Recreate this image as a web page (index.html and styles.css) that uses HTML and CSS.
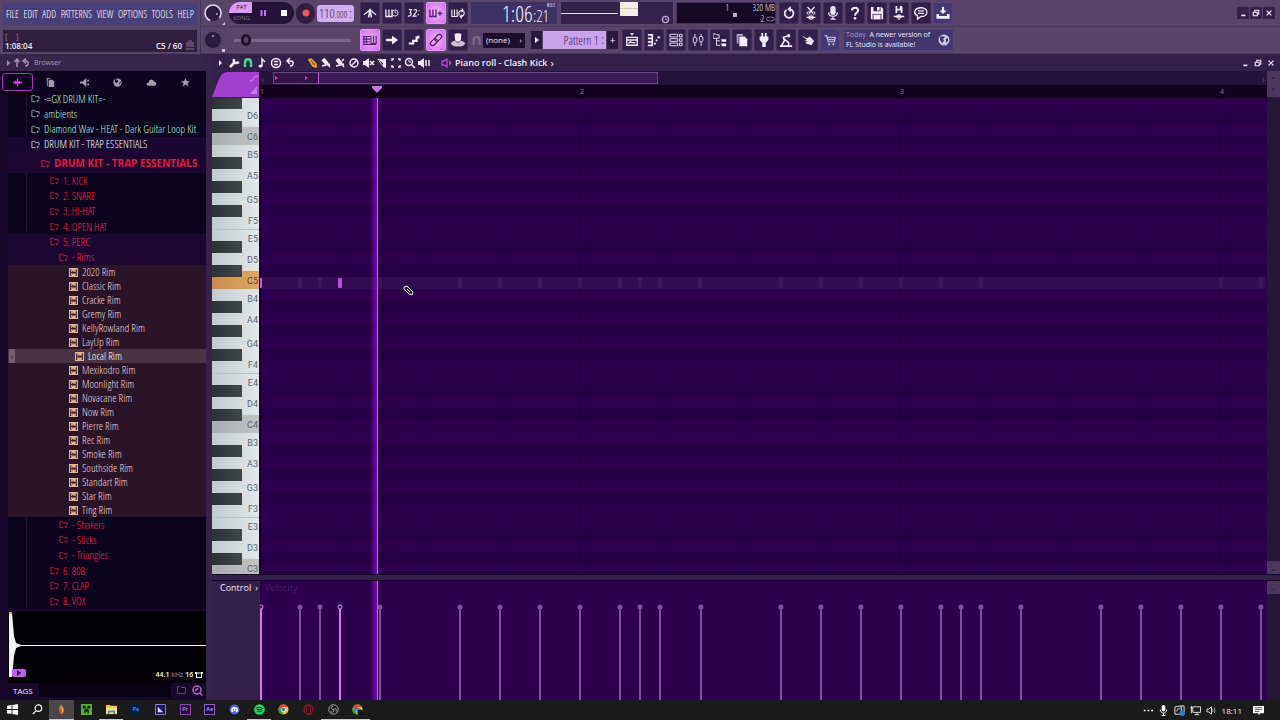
FILE: index.html
```
<!DOCTYPE html>
<html lang="en">
<head>
  <meta charset="utf-8">
  <title>FL Studio</title>
  <link rel="stylesheet" href="styles.css">
</head>
<body>
  <!-- shared icons -->
  <svg class="defs" aria-hidden="true">
    <symbol id="folder" viewBox="0 0 10 10"><path d="M9 6V3H5L4 1.500H1V8.500H5" fill="none" stroke="currentColor"/><path d="M6 7H9L7.500 9.500Z" fill="currentColor"/></symbol>
    <symbol id="sample" viewBox="0 0 8 8"><path d="M0 0H8V8H0Z" fill="#e3b593"/><path d="M1.500 1V7M6.500 1V7M2 4H6M3.500 2.500V5.500M5 3V5" stroke="#40202a" fill="none"/></symbol>
    <symbol id="stem" viewBox="0 0 8 120" overflow="visible"><path d="M4 28V120" stroke="currentColor" stroke-width="2"/><circle cx="4" cy="26" r="2.500" fill="currentColor"/></symbol>
    <symbol id="stem-on" viewBox="0 0 8 120" overflow="visible"><path d="M4 28V120" stroke="#d678f2" stroke-width="2"/><circle cx="4" cy="26" r="2" fill="#4a1070" stroke="#e08af5"/></symbol>
    <symbol id="min" viewBox="0 0 10 10"><path d="M3 8H8" stroke="currentColor" stroke-width="2"/></symbol>
    <symbol id="restore" viewBox="0 0 10 10"><path d="M3.500 3.500V1.500H8.500V6.500H6.500M1.500 4H6.500V8.500H1.500Z" fill="none" stroke="currentColor" stroke-width="1.300"/></symbol>
    <symbol id="close" viewBox="0 0 10 10"><path d="M2 2L8 8M8 2L2 8" stroke="currentColor" stroke-width="1.500"/></symbol>
    <symbol id="globe" viewBox="0 0 14 14"><circle cx="7" cy="7" r="5.500" fill="#cfc4de"/><path d="M5 3L8 4L6 6L7 8L5 10L3 7L3 4ZM9 6L11 5L11 8L9 10Z" fill="#43366b"/></symbol>
  </svg>

  <header class="toolbar">
    <div class="toolbar-left">
      <nav class="menu">
        <a href="#">FILE</a><a href="#">EDIT</a><a href="#">ADD</a><a href="#">PATTERNS</a><a href="#">VIEW</a><a href="#">OPTIONS</a><a href="#">TOOLS</a><a href="#">HELP</a>
      </nav>
      <div class="hint">
        <div><small>[ &nbsp; &nbsp;]</small><b>1:08:04</b></div>
        <b>C5 / 60</b>
        <svg width="8" height="12" viewBox="0 0 8 12"><path d="M1 8V3M3 8V1M5 8V1M7 8V3M0 10H8" stroke="#6a5874" fill="none" stroke-width="1.500"/></svg>
      </div>
    </div>
    <div class="toolbar-rows">
      <div class="row">
        <button class="knob" aria-label="Main volume"><svg width="24" height="24" viewBox="0 0 24 24"><circle cx="12" cy="12" r="8" fill="#2d1c3f" stroke="#e9dcf3" stroke-width="1.500" stroke-dasharray="40 12" transform="rotate(110 12 12)"/><circle cx="16" cy="13" r="1" fill="#b89fcc"/><path d="M21 24H24V21Z" fill="#cfc0da"/></svg></button>
        <div class="transport">
          <div class="mode"><button class="on">PAT</button><button>SONG</button></div>
          <button aria-label="Pause"><svg width="8" height="8" viewBox="0 0 8 8"><path d="M2.500 1V7M6 1V7" stroke="#c76cf0" stroke-width="2"/></svg></button>
          <button aria-label="Stop"><svg width="8" height="8" viewBox="0 0 8 8"><path d="M1 1H7V7H1Z" fill="#fff"/></svg></button>
        </div>
        <button class="record" aria-label="Record"><svg width="8" height="8" viewBox="0 0 8 8"><circle cx="4" cy="4" r="3.500" fill="#f0565a"/></svg></button>
        <div class="tempo"><span>110<small>.000</small></span><i>:</i></div>
        <div class="buttons">
          <button class="tool" aria-label="Metronome"><svg viewBox="0 0 16 16"><path d="M1 10L6 6M15 10L10 6M8 3V13M6 13L8 4L10 13" fill="none" stroke="currentColor" stroke-width="1.200"/><path d="M5 6L8 3L11 6L8 8Z" fill="currentColor"/></svg></button>
          <button class="tool" aria-label="Wait for input"><svg viewBox="0 0 16 16"><path d="M1 4V12H8V4M4.500 4V11" fill="none" stroke="currentColor" stroke-width="1.500"/><circle cx="11.500" cy="8" r="3.500" fill="none" stroke="currentColor"/><path d="M11.500 6V8H13" fill="none" stroke="currentColor"/></svg></button>
          <button class="tool" aria-label="Countdown"><svg viewBox="0 0 16 16"><path d="M2 4H5L3.500 7.500C6 7.500 5 12 1 11.500M8 5C9 3 12 4 10.500 7L7 11.500H11M14 5V6M13 9V10.500" fill="none" stroke="currentColor" stroke-width="1.300"/></svg></button>
          <button class="tool on" aria-label="Blend recording"><svg viewBox="0 0 16 16"><path d="M1 4V12H8V4M4.500 4V11M10 8.500H15M12.500 6V11" fill="none" stroke="currentColor" stroke-width="1.500"/></svg></button>
          <button class="tool" aria-label="Loop recording"><svg viewBox="0 0 16 16"><path d="M1 4V12H7V4M4 4V11M9.500 11C8 7 10 5 13 5M14.500 6C16 9 14 12 11 12M12 3L14 5L12 7M12.500 10L10.500 12L12.500 14" fill="none" stroke="currentColor" stroke-width="1.300"/></svg></button>
        </div>
        <div class="clock"><span>1:06<small>:21</small></span><sup>B:S:T</sup></div>
        <div class="scope"><span></span><i></i><svg width="9" height="9" viewBox="0 0 10 10"><circle cx="5" cy="5" r="3.500" fill="none" stroke="#b9a7c8" stroke-width="1.500"/><path d="M5 3V5H7" stroke="#b9a7c8" fill="none"/></svg></div>
        <div class="cpu"><span>1</span><i></i><div><span>320 MB</span><span>2 <svg width="9" height="6" viewBox="0 0 9 6"><ellipse cx="4.500" cy="3" rx="4" ry="2" fill="none" stroke="#8c7b98"/></svg></span></div></div>
        <div class="buttons">
          <button class="tool" aria-label="Undo"><svg viewBox="0 0 16 16"><path d="M5 4.500A5 5 0 1 0 9 3.500" fill="none" stroke="currentColor" stroke-width="2"/><path d="M10 0V7L6 3.500Z" fill="currentColor"/></svg></button>
          <button class="tool" aria-label="Cut"><svg viewBox="0 0 16 16"><path d="M4 1L10 8M12 1L6 8M3 13H13M6 11V15M10 11V15M8 10V16" stroke="currentColor" stroke-width="1.500" fill="none"/><circle cx="5" cy="8" r="1.500" fill="none" stroke="currentColor"/><circle cx="11" cy="8" r="1.500" fill="none" stroke="currentColor"/></svg></button>
          <button class="tool" aria-label="Microphone"><svg viewBox="0 0 16 16"><rect x="5" y="0" width="6" height="10" rx="3" fill="currentColor"/><path d="M3 7C3 13 13 13 13 7M8 12V15M5 15H11" fill="none" stroke="currentColor" stroke-width="1.300"/></svg></button>
          <button class="tool" aria-label="Help"><svg viewBox="0 0 16 16"><path d="M4.500 5C4.500 1 11.500 1 11.500 5C11.500 7.500 8 7.500 8 11" fill="none" stroke="currentColor" stroke-width="2.200"/><circle cx="8" cy="14" r="1.500" fill="currentColor"/></svg></button>
          <button class="tool" aria-label="Save"><svg viewBox="0 0 16 16"><path d="M1 1H13L15 3V15H1Z" fill="currentColor"/><path d="M4 1H12V6H4ZM3 9H13V15H3Z" fill="#33204a"/><path d="M8 1H11V5H8ZM4 10H12V15H4Z" fill="currentColor"/></svg></button>
          <button class="tool" aria-label="Save as"><svg viewBox="0 0 16 16"><path d="M4 0H11L12 1V8H4Z" fill="currentColor"/><path d="M6 0H9V3H6ZM6 5H10V8H6Z" fill="#33204a"/><path d="M2 12H14M6 10V14M8 9V16M10 10V14" stroke="currentColor" stroke-width="1.500"/></svg></button>
          <button class="tool" aria-label="Messages"><svg viewBox="0 0 16 16"><path d="M8 2C17 2 17 12 8 12L4 15V11C-1 9 0 2 8 2ZM4.500 5.500H11.500M4.500 8.500H11.500" fill="none" stroke="currentColor" stroke-width="1.500"/></svg></button>
          <button class="tool blue" aria-label="Download"><svg viewBox="0 0 16 16"><path d="M8 1V6" fill="none" stroke="currentColor" stroke-width="2.500"/><path d="M4 5H12L8 9Z" fill="currentColor"/><path d="M2 9V13H14V9" fill="none" stroke="currentColor" stroke-width="3"/></svg></button>
        </div>
        <div class="window-buttons">
          <button aria-label="Minimize"><svg><use href="#min"/></svg></button>
          <button aria-label="Restore"><svg><use href="#restore"/></svg></button>
          <button aria-label="Close"><svg><use href="#close"/></svg></button>
        </div>
      </div>
      <div class="row">
        <button class="knob" aria-label="Main pitch"><svg width="24" height="24" viewBox="0 0 24 24"><circle cx="12" cy="12" r="9.500" fill="none" stroke="#3d2a50" stroke-dasharray="1 2"/><circle cx="12" cy="12" r="8" fill="#2d1c3f"/><circle cx="12" cy="8" r="1" fill="#b89fcc"/><path d="M21 21H24V24H21Z" fill="#cfc0da"/></svg></button>
        <input class="position" type="range" min="0" max="100" value="7" aria-label="Song position">
        <div class="buttons">
          <button class="tool on" aria-label="Typing keyboard"><svg viewBox="0 0 16 16"><path d="M0 4H8M0 7H8M0 10H8M0 13H15M1 4V12M4 4V12M9 3V12H15V3M12 3V12" fill="none" stroke="currentColor" stroke-width="1.300"/></svg></button>
          <button class="tool" aria-label="Scroll"><svg viewBox="0 0 16 16"><path d="M1 6.500H8V3L15 8L8 13V9.500H1Z" fill="currentColor"/></svg></button>
          <button class="tool" aria-label="Step"><svg viewBox="0 0 16 16"><path d="M2 12H7V9H11V5H13V3" fill="none" stroke="currentColor" stroke-width="2.500"/></svg></button>
          <button class="tool on" aria-label="Link"><svg viewBox="0 0 16 16"><g transform="rotate(-45 8 8)" fill="none" stroke="currentColor" stroke-width="1.400"><rect x="0" y="5.500" width="9" height="5" rx="2.500"/><rect x="7" y="5.500" width="9" height="5" rx="2.500"/></g></svg></button>
          <button class="tool" aria-label="Hat"><svg viewBox="0 0 16 16"><ellipse cx="8" cy="12" rx="8" ry="3.500" fill="#cdbfd8"/><path d="M4 1C6 0 10 0 12 1L11 10C10 11 6 11 5 10Z" fill="currentColor"/><path d="M5 9C6 11 10 11 11 9" stroke="#33204a" fill="none"/></svg></button>
        </div>
        <svg class="magnet" width="9" height="9" viewBox="0 0 9 9"><path d="M1.500 9V4C1.500 0 7.500 0 7.500 4V9" fill="none" stroke="#7c698a" stroke-width="2"/></svg>
        <button class="snap"><span>(none)</span><i>›</i></button>
        <div class="pattern">
          <button aria-label="Pattern menu"><svg width="4" height="6" viewBox="0 0 4 6"><path d="M0 0V6L4 3Z" fill="#fff"/></svg></button>
          <label><input type="text" value="Pattern 1" aria-label="Pattern"><i>:</i></label>
          <button aria-label="Add pattern">+</button>
        </div>
        <div class="buttons">
          <button class="tool" aria-label="Playlist"><svg viewBox="0 0 16 16"><path d="M2 5H14V14H2ZM2 8H14M4 12L6 10L8 11H12" fill="none" stroke="currentColor" stroke-width="1.500"/><path d="M6 0H10L8 3Z" fill="currentColor"/></svg></button>
          <button class="tool" aria-label="Piano roll"><svg viewBox="0 0 16 16"><path d="M1 2H6V14H1M1 6H5M1 10H5M8 12H10M10 8.500H12M12 5H15" fill="none" stroke="currentColor" stroke-width="2"/></svg></button>
          <button class="tool" aria-label="Channel rack"><svg viewBox="0 0 16 16"><path d="M1 1.500H10V4.500H1ZM1 6.500H10V9.500H1ZM1 11.500H10V14.500H1ZM12 1.500H15V4.500H12ZM12 6.500H15V9.500H12ZM12 11.500H15V14.500H12Z" fill="none" stroke="currentColor"/></svg></button>
          <button class="tool" aria-label="Mixer"><svg viewBox="0 0 16 16"><path d="M4.500 1V5M4.500 11V15M11.500 1V4M11.500 10V15" stroke="currentColor"/><rect x="2.500" y="5" width="4" height="6" rx="1.500" fill="none" stroke="currentColor"/><rect x="9.500" y="4" width="4" height="6" rx="1.500" fill="none" stroke="currentColor"/></svg></button>
          <button class="tool" aria-label="Browser"><svg viewBox="0 0 16 16"><path d="M0 1H3L4 2H7V6H0ZM4 6V14H8M4 9H8M9 8H11M9 13H11" fill="none" stroke="currentColor"/><path d="M10 7H15V10H10ZM10 12H15V15H10Z" fill="currentColor"/></svg></button>
          <button class="tool" aria-label="Projects"><svg viewBox="0 0 16 16"><path d="M2 1H9V3H4V12H2Z" fill="#b9a7c8"/><path d="M5 4H11L14 7V15H5Z" fill="currentColor"/></svg></button>
          <button class="tool" aria-label="Plugins"><svg viewBox="0 0 16 16"><path d="M5 0H7V4H9V0H11V4H13V8L10 11V16H6V11L3 8V4H5Z" fill="currentColor"/></svg></button>
          <button class="tool" aria-label="Tempo tapper"><svg viewBox="0 0 16 16"><path d="M11 3L5 5L6 9L3 14M5 6L11 11V14M1 15H15" fill="none" stroke="currentColor" stroke-width="1.800"/><circle cx="11" cy="3" r="2" fill="currentColor"/></svg></button>
          <button class="tool" aria-label="Touch"><svg viewBox="0 0 16 16"><path d="M1 3L7 6L10 4L15 9L12 14L6 12L5 10L8 10L4 8L7 8Z" fill="currentColor"/></svg></button>
          <button class="tool blue" aria-label="Shop"><svg viewBox="0 0 16 16"><path d="M2 3H4L6 10H13L14 5H5M5 7.500H13" fill="none" stroke="#c4b6e6" stroke-width="1.400"/><circle cx="7" cy="13" r="1.200" fill="#c4b6e6"/><circle cx="12" cy="13" r="1.200" fill="#c4b6e6"/></svg></button>
        </div>
        <a class="news" href="#"><span><em>Today</em> &nbsp;A newer version of<br>FL Studio is available!</span><svg width="14" height="14"><use href="#globe"/></svg></a>
      </div>
    </div>
  </header>

  <main class="workspace">
    <aside class="browser">
      <div class="browser-title"><svg width="24" height="10" viewBox="0 0 24 10"><path d="M1 2V8L4 5Z" fill="#a18fae"/><path d="M11 9V2M8.500 4L11 1L13.500 4M18 3H20C23 3 23 8 19 8M20 0.500L17 3L20 5.500" fill="none" stroke="#a18fae" stroke-width="1.500"/></svg><span>Browser</span></div>
      <div class="tabs">
        <button class="on" aria-label="All"><svg viewBox="0 0 12 12"><path d="M1 6H11M4 4V8M6 2V10M8 4V8" stroke="#e23bf0" stroke-width="1.400"/></svg></button>
        <button aria-label="Files"><svg viewBox="0 0 12 12"><path d="M2 1H6V2H3V10H2ZM4 3H8L10 5V11H4Z" fill="currentColor"/></svg></button>
        <button aria-label="Plugins"><svg viewBox="0 0 12 12"><path d="M1 5H4L8 1V11L4 7H1ZM9 3H11V5H9ZM9 7H11V9H9Z" fill="currentColor"/></svg></button>
        <button aria-label="Online"><svg viewBox="0 0 12 12"><circle cx="6" cy="6" r="4.500" fill="currentColor"/><path d="M4 2L7 4L5 7L3 5ZM8 6L10 5L8 9Z" fill="#0d0420"/></svg></button>
        <button aria-label="Cloud"><svg viewBox="0 0 12 12"><path d="M3 9.500C0 9.500 0 6 3 6C3 2 8 2 8.500 5C12 5 12 9.500 9.500 9.500Z" fill="currentColor"/></svg></button>
        <button aria-label="Favourites"><svg viewBox="0 0 12 12"><path d="M6 1L7.500 4.500H11L8.200 6.800L9.200 10.500L6 8.200L2.800 10.500L3.800 6.800L1 4.500H4.500Z" fill="currentColor"/></svg></button>
      </div>
      <div class="tree">
        <ul class="folders top">
          <li class="green"><svg><use href="#folder"/></svg>-=GX DRUM KIT=-</li>
          <li class="green"><svg><use href="#folder"/></svg>ambients</li>
          <li class="green"><svg><use href="#folder"/></svg>Diamond Wav - HEAT - Dark Guitar Loop Kit</li>
          <li class="open"><svg><use href="#folder"/></svg>DRUM KIT - TRAP ESSENTIALS</li>
        </ul>
        <div class="kit"><svg><use href="#folder"/></svg>DRUM KIT - TRAP ESSENTIALS</div>
        <ul class="folders">
          <li><svg><use href="#folder"/></svg>1. KICK</li>
          <li><svg><use href="#folder"/></svg>2. SNARE</li>
          <li><svg><use href="#folder"/></svg>3. HI-HAT</li>
          <li><svg><use href="#folder"/></svg>4. OPEN HAT</li>
          <li class="lit"><svg><use href="#folder"/></svg>5. PERC</li>
          <li class="lit sub"><svg><use href="#folder"/></svg>- Rims</li>
        </ul>
        <ul class="samples">
          <li><svg><use href="#sample"/></svg>2020 Rim</li>
          <li><svg><use href="#sample"/></svg>Classic Rim</li>
          <li><svg><use href="#sample"/></svg>Cracke Rim</li>
          <li><svg><use href="#sample"/></svg>Gremy Rim</li>
          <li><svg><use href="#sample"/></svg>KellyRowland Rim</li>
          <li><svg><use href="#sample"/></svg>LayUp Rim</li>
          <li class="selected"><svg><use href="#sample"/></svg>Local Rim</li>
          <li><svg><use href="#sample"/></svg>Mexikodro Rim</li>
          <li><svg><use href="#sample"/></svg>Moonlight Rim</li>
          <li><svg><use href="#sample"/></svg>Novacane Rim</li>
          <li><svg><use href="#sample"/></svg>Now Rim</li>
          <li><svg><use href="#sample"/></svg>Pierre Rim</li>
          <li><svg><use href="#sample"/></svg>Rec Rim</li>
          <li><svg><use href="#sample"/></svg>Smoke Rim</li>
          <li><svg><use href="#sample"/></svg>Southside Rim</li>
          <li><svg><use href="#sample"/></svg>Standart Rim</li>
          <li><svg><use href="#sample"/></svg>Star Rim</li>
          <li><svg><use href="#sample"/></svg>Ting Rim</li>
        </ul>
        <ul class="folders">
          <li class="sub"><svg><use href="#folder"/></svg>- Shakers</li>
          <li class="sub"><svg><use href="#folder"/></svg>- Sticks</li>
          <li class="sub"><svg><use href="#folder"/></svg>- Triangles</li>
          <li><svg><use href="#folder"/></svg>6. 808</li>
          <li><svg><use href="#folder"/></svg>7. CLAP</li>
          <li><svg><use href="#folder"/></svg>8. VOX</li>
        </ul>
      </div>
      <div class="preview">
        <svg class="wave" viewBox="0 0 197 70" preserveAspectRatio="none"><path d="M1 2H4L6 25L8 32L13 34H197V35H13L8 37L6 45L4 66H1Z" fill="#f4f0f6"/><path d="M1 1H4V3H1Z" fill="#e79a4e"/></svg>
        <button class="play" aria-label="Play sample"><svg width="4" height="6" viewBox="0 0 4 6"><path d="M0 0V6L4 3Z" fill="#2a0a40"/></svg></button>
        <span class="rate"><b>44.1</b> kHz <b>16</b> <svg width="8" height="8" viewBox="0 0 8 8"><path d="M0 1H2V3H0ZM6 1H8V3H6Z" fill="#fff"/><path d="M1 2H7M1.500 2V7M6.500 2V7M1 6.500H7" fill="none" stroke="#fff"/></svg></span>
      </div>
      <div class="tags">
        <label for="tags">TAGS</label>
        <input type="text" id="tags">
        <svg width="9" height="8" viewBox="0 0 9 8"><path d="M0.500 7.500V0.500H3L4 1.500H8.500V7.500Z" fill="none" stroke="#57475f"/></svg>
        <svg width="11" height="11" viewBox="0 0 11 11"><circle cx="5" cy="5" r="4" fill="none" stroke="#b565d8" stroke-width="1.500"/><path d="M8 8L10.500 10.500M3 6L6 3" stroke="#b565d8" stroke-width="1.500"/></svg>
      </div>
    </aside>

    <section class="piano-roll">
      <div class="roll-title">
        <svg width="222" height="14" viewBox="0 0 222 14" fill="none" stroke="#f3ebf8" stroke-width="1.500">
          <path d="M7 4V10L10 7Z" fill="#f3ebf8" stroke="none"/>
          <path d="M18 11L23 6M22 3C21 7 24 8 27 6" stroke-width="2.500"/>
          <path d="M33 11V7C33 2 39 2 39 7V11" stroke="#46d98b" stroke-width="2.500"/>
          <path d="M50 10V3L53 6"/><ellipse cx="48.500" cy="10" rx="2" ry="1.500" fill="#f3ebf8" stroke="none"/>
          <circle cx="64" cy="7" r="4.500"/><path d="M62 5.500H66M62 8.500H66"/>
          <path d="M75 5H79C82 5 82 10 78 10M78 2L75 5L78 8"/>
          <path d="M97 4L99 3L104 8L104 11L101 10Z" fill="#8c5f28" stroke="#f0a93c"/>
          <path d="M111 3L115 8" stroke-width="4"/><path d="M110 10L118 8M115 7L118 11"/>
          <path d="M125 3L129 8" stroke-width="4"/><path d="M124 10L132 8M129 7L132 11M130 5L132 3"/>
          <circle cx="142" cy="7" r="4"/><path d="M139 10L145 4"/>
          <path d="M151 5H153L157 2V12L153 9H151Z" fill="#f3ebf8" stroke="none"/><path d="M158 5L162 9M162 5L158 9"/>
          <path d="M165 3H174V12L171 11V7Z" fill="#f3ebf8" stroke="none"/><path d="M167 5L172 11" stroke-width="1"/>
          <path d="M180 5V3H182M186 3H188V5M188 9V11H186M182 11H180V9"/>
          <circle cx="197" cy="6" r="3.500"/><path d="M200 9L203 12"/><path d="M197 4V6H199" stroke-width="1"/>
          <path d="M206 5H208L212 2V12L208 9H206Z" fill="#f3ebf8" stroke="none"/><path d="M214 4V10M217 4V10"/>
        </svg>
        <svg class="speaker" width="11" height="10" viewBox="0 0 11 10"><path d="M1 3H3L6 1V9L3 7H1Z" fill="none" stroke="#b04fd8" stroke-width="1.300"/><path d="M8 2V8L10.500 5Z" fill="#b04fd8"/></svg>
        <h1>Piano roll - Clash Kick</h1><i>›</i>
        <div class="window-buttons plain">
          <button aria-label="Minimize"><svg><use href="#min"/></svg></button>
          <button aria-label="Restore"><svg><use href="#restore"/></svg></button>
          <button aria-label="Close"><svg><use href="#close"/></svg></button>
        </div>
      </div>
      <div class="roll-head">
        <svg class="corner" viewBox="0 0 47 27" preserveAspectRatio="none"><path d="M0 26L7 8Q10 1 16 1H47V26Z" fill="#a33fd0"/><path d="M38 10C43 10 40 5 46 5" fill="none" stroke="#d79bf0"/><path d="M38 23H45V15Z" fill="#c77be8"/></svg>
        <div class="head-bars">
          <div class="overview"><span>‹</span><div class="overview-range"><svg width="34" height="6" viewBox="0 0 34 6"><path d="M1 1V5L4 3ZM31 1V5L34 3Z" fill="#c94fb8"/></svg></div><span class="last">›</span></div>
          <div class="ruler"><span>1</span><span>2</span><span>3</span><span>4</span><svg class="marker" width="12" height="8" viewBox="0 0 12 8"><path d="M1 0H11V2L6 7L1 2Z" fill="#c473ee"/></svg></div>
        </div>
        <div class="head-scroll"><button>•</button><button>⌃</button></div>
      </div>
      <div class="roll-body">
        <div class="keys">
          <div class="key tall sharp">D6</div>
          <div class="key sharp root">C6</div>
          <div class="key">B5</div>
          <div class="key tall sharp">A5</div>
          <div class="key tall sharp">G5</div>
          <div class="key sharp">F5</div>
          <div class="key top">E5</div>
          <div class="key tall sharp">D5</div>
          <div class="key sharp pressed">C5</div>
          <div class="key">B4</div>
          <div class="key tall sharp">A4</div>
          <div class="key tall sharp">G4</div>
          <div class="key sharp">F4</div>
          <div class="key top">E4</div>
          <div class="key tall sharp">D4</div>
          <div class="key sharp root">C4</div>
          <div class="key">B3</div>
          <div class="key tall sharp">A3</div>
          <div class="key tall sharp">G3</div>
          <div class="key sharp">F3</div>
          <div class="key top">E3</div>
          <div class="key tall sharp">D3</div>
          <div class="key sharp root">C3</div>
        </div>
        <div class="grid">
          <svg class="canvas">
            <path d="M0 179H1006V191H0Z" fill="#3a1558" opacity=".5"/>
            <g fill="#4a246a" opacity=".45">
              <path d="M38 180H42V190H38ZM58 180H62V190H58ZM118 180H122V190H118ZM198 180H202V190H198ZM238 180H242V190H238ZM278 180H282V190H278ZM318 180H322V190H318ZM358 180H362V190H358ZM378 180H382V190H378ZM398 180H402V190H398ZM438 180H442V190H438Z"/>
              <path d="M519 180H523V190H519ZM559 180H563V190H559ZM599 180H603V190H599ZM639 180H643V190H639ZM679 180H683V190H679ZM719 180H723V190H719ZM959 180H963V190H959ZM999 180H1003V190H999Z"/>
            </g>
            <rect x="-2" y="180" width="4" height="10" rx="1" fill="#c562ea"/>
            <rect x="78" y="180" width="4" height="10" rx="1" fill="#b552dc"/>
            <path d="M144 189L147 188L153 194L152 197L149 196L144 191Z" fill="#2c2030" stroke="#efe6e8"/><path d="M147 191L150 194" stroke="#efe6e8"/>
          </svg>
          <div class="playhead"></div>
        </div>
        <div class="scroll"><span></span><button>⌄</button></div>
      </div>
      <div class="splitter"></div>
      <div class="control">
        <button class="control-name">Control <i>›</i></button>
        <div class="velocity">
          <span>Velocity</span>
          <svg class="canvas">
            <g color="#80509c">
              <use href="#stem" x="36" width="8" height="120"/><use href="#stem" x="56" width="8" height="120"/>
              <use href="#stem" x="116" width="8" height="120"/><use href="#stem" x="196" width="8" height="120"/>
              <use href="#stem" x="236" width="8" height="120"/><use href="#stem" x="276" width="8" height="120"/>
              <use href="#stem" x="316" width="8" height="120"/><use href="#stem" x="356" width="8" height="120"/>
              <use href="#stem" x="376" width="8" height="120"/><use href="#stem" x="396" width="8" height="120"/>
              <use href="#stem" x="437" width="8" height="120"/><use href="#stem" x="517" width="8" height="120"/>
              <use href="#stem" x="557" width="8" height="120"/><use href="#stem" x="597" width="8" height="120"/>
              <use href="#stem" x="637" width="8" height="120"/><use href="#stem" x="677" width="8" height="120"/>
              <use href="#stem" x="697" width="8" height="120"/><use href="#stem" x="717" width="8" height="120"/>
              <use href="#stem" x="757" width="8" height="120"/><use href="#stem" x="837" width="8" height="120"/>
              <use href="#stem" x="877" width="8" height="120"/><use href="#stem" x="917" width="8" height="120"/>
              <use href="#stem" x="957" width="8" height="120"/><use href="#stem" x="997" width="8" height="120"/>
            </g>
            <use href="#stem-on" x="-3" width="8" height="120"/><use href="#stem-on" x="76" width="8" height="120"/>
          </svg>
          <div class="playhead"></div>
        </div>
        <div class="scroll"><button>-</button></div>
      </div>
    </section>
  </main>

  <footer class="taskbar">
    <nav class="apps">
      <button aria-label="Start"><svg viewBox="0 0 12 12"><path d="M0 2L5 1V5.500H0ZM6 1L12 0V5.500H6ZM0 6.500H5V11L0 10ZM6 6.500H12V12L6 11Z" fill="#fff"/></svg></button>
      <button aria-label="Search"><svg viewBox="0 0 12 12"><circle cx="7" cy="4.500" r="3.500" fill="none" stroke="#fff" stroke-width="1.300"/><path d="M4.500 7L1 11" stroke="#fff" stroke-width="1.500"/></svg></button>
      <button class="active" aria-label="FL Studio"><svg viewBox="0 0 12 12"><path d="M5 2C10 4 10 9 6 11C2 9 3 5 5 2Z" fill="#ee7f2e"/><path d="M5 2C8 5 8 9 6 11C8 8 5 5 5 2Z" fill="#f6c04a"/><path d="M4 1L7 2L6 4Z" fill="#5cb34c"/><path d="M4 5C3 8 4 10 6 11V5Z" fill="#d8403a"/></svg></button>
      <button aria-label="Minecraft"><svg viewBox="0 0 12 12"><path d="M0 0H12V12H0Z" fill="#57ab38"/><path d="M2 2H5V5H2ZM7 2H10V5H7ZM5 5H7V6H8.500V10H7V8.500H5V10H3.500V6H5Z" fill="#10240c"/></svg></button>
      <button class="running" aria-label="Explorer"><svg viewBox="0 0 12 12"><path d="M0 1H4L5 2H12V11H0Z" fill="#f1c24c"/><path d="M0 4H12V11H0Z" fill="#fbe08a"/><path d="M2 7H10V11H8V9H4V11H2Z" fill="#3f8fd0"/></svg></button>
      <button class="app ps"><span>Ps</span></button>
      <button aria-label="Media Encoder"><svg viewBox="0 0 12 12"><path d="M.5.5H11.500V11.500H.5Z" fill="#1b1650" stroke="#8e8be8"/><path d="M3 3L9 9H3Z" fill="#d9d8ff"/></svg></button>
      <button class="app pr"><span>Pr</span></button>
      <button class="app ae"><span>Ae</span></button>
      <button aria-label="Discord"><svg viewBox="0 0 12 12"><circle cx="6" cy="6" r="5.500" fill="#5661e8"/><path d="M3 4C5 3 7 3 9 4L10 8L8 9L7.500 8H4.500L4 9L2 8Z" fill="#fff"/><circle cx="4.700" cy="6.300" r=".8" fill="#5661e8"/><circle cx="7.300" cy="6.300" r=".8" fill="#5661e8"/></svg></button>
      <button class="running" aria-label="Spotify"><svg viewBox="0 0 12 12"><circle cx="6" cy="6" r="5.800" fill="#1ed760"/><path d="M2.500 4.300C5 3.500 8 3.800 9.700 4.800M3 6.200C5 5.500 7.500 5.800 9 6.700M3.500 8C5 7.500 7 7.700 8.300 8.500" fill="none" stroke="#111"/></svg></button>
      <button aria-label="Chrome"><svg viewBox="0 0 12 12"><circle cx="6" cy="6" r="5.500" fill="#f2c230"/><path d="M1.200 3.300A5.500 5.500 0 0 1 10.800 3.300H6L4 7Z" fill="#e04536"/><path d="M1.200 3.300L4 7.500L6 11.500A5.500 5.500 0 0 1 1.200 3.300Z" fill="#2f9e50"/><circle cx="6" cy="6" r="2.500" fill="#fff"/><circle cx="6" cy="6" r="2" fill="#3c7de0"/></svg></button>
      <button aria-label="Opera GX"><svg viewBox="0 0 12 12"><circle cx="6" cy="6" r="5" fill="none" stroke="#96182c" stroke-width="1.300"/><ellipse cx="6" cy="6" rx="2.300" ry="4.500" fill="none" stroke="#96182c"/></svg></button>
      <button class="running" aria-label="OBS"><svg viewBox="0 0 12 12"><circle cx="6" cy="6" r="5.200" fill="#222" stroke="#a8a8a8"/><path d="M6 6C3 6 3 2.500 5.500 2.500M6 6C8 4 10 6 9 8M6 6C7 9 4 10 3 8" fill="none" stroke="#a8a8a8"/></svg></button>
      <button class="running" aria-label="Chrome profile"><svg viewBox="0 0 12 12"><circle cx="6" cy="6" r="5.500" fill="#f2c230"/><path d="M1.200 3.300A5.500 5.500 0 0 1 10.800 3.300H6L4 7Z" fill="#e04536"/><path d="M1.200 3.300L4 7.500L6 11.500A5.500 5.500 0 0 1 1.200 3.300Z" fill="#2f9e50"/><circle cx="6" cy="6" r="2.300" fill="#3c7de0"/><circle cx="9" cy="9" r="3" fill="#16161a"/></svg></button>
    </nav>
    <div class="tray">
      <svg viewBox="0 0 12 12"><path d="M2 6H4M6 6H8M10 6H12" stroke="#fff" stroke-width="1.500"/></svg>
      <svg viewBox="0 0 12 12"><rect x="4" y="0" width="4" height="7" rx="2" fill="#fff"/><path d="M2.500 5C2.500 10 9.500 10 9.500 5M6 9V11.500M4 11.500H8" fill="none" stroke="#fff"/></svg>
      <svg viewBox="0 0 12 12"><path d="M1 2L8 1V10H1ZM8 1H11V8" fill="none" stroke="#eee"/><path d="M3 7C3 4 5 4 7 4" stroke="#eee" fill="none"/><circle cx="9" cy="9" r="3" fill="#2f7fc8"/></svg>
      <svg viewBox="0 0 12 12"><path d="M3 2H11.500V8H3ZM5 10.500H10M7.500 8V10M1.500 1V9M.5 3H3" fill="none" stroke="#eee"/></svg>
      <svg viewBox="0 0 12 12"><path d="M1 4.500H3L6 2V10L3 7.500H1Z" fill="none" stroke="#eee"/><path d="M7.500 4.500V7.500M9.500 3V9" stroke="#aaa"/></svg>
      <time>18:11</time>
      <svg class="note" viewBox="0 0 12 12"><path d="M0 1H12V9H8L6 11.500V9H0Z" fill="#fff"/><path d="M2 3H10M2 5H10M2 7H7" stroke="#555"/></svg>
    </div>
  </footer>
</body>
</html>
```
FILE: styles.css
```
* {
  box-sizing: border-box;
}

body {
  margin: 0;
  height: 100vh;
  display: flex;
  flex-direction: column;
  overflow: hidden;
  background-color: #1a0b2c;
  color: #f3ebf8;
  font-family: "Open Sans", "Noto Sans", sans-serif;
  font-size: 11px;
}

button,
input {
  margin: 0;
  padding: 0;
  border: none;
  background: none;
  color: inherit;
  font: inherit;
}

a {
  color: inherit;
  text-decoration: none;
}

ul {
  margin: 0;
  padding: 0;
  list-style: none;
}

i,
em {
  font-style: normal;
}

svg {
  display: block;
  flex: none;
}

.defs {
  position: absolute;
  width: 0;
  height: 0;
}

/* Condensed text */
.menu,
.tempo,
.clock,
.cpu,
.pattern label,
.tree {
  font-family: "Open Sans Condensed Light", "Open Sans Condensed", "Open Sans", sans-serif;
}

/* Toolbar */
.toolbar {
  display: flex;
  height: 54px;
  background-color: #594569;
}

.toolbar-left {
  width: 201px;
  padding: 3px 3px 2px;
  display: flex;
  flex-direction: column;
  gap: 5px;
  border-right: 1px solid #463456;
}

.menu {
  flex: 1;
  display: flex;
  align-items: center;
  justify-content: space-between;
  padding: 0 3px;
  background-color: #4a4078;
  color: #fff;
  font-size: 10px;
}

.hint {
  flex: 1;
  display: flex;
  align-items: flex-end;
  justify-content: space-between;
  gap: 4px;
  padding: 0 3px 1px 2px;
  background-color: #311f40;
  font-size: 8px;
  line-height: 11px;
}

.hint div {
  flex: 1;
}

.hint small {
  display: block;
  color: #9a87a8;
  font-size: 8px;
  line-height: 9px;
}

.hint b {
  font-weight: 600;
}

.toolbar-rows {
  flex: 1;
  display: flex;
  flex-direction: column;
}

.row {
  flex: 1;
  display: flex;
  align-items: center;
  border-bottom: 1px solid #4b3859;
}

.knob {
  width: 24px;
  height: 24px;
}

.transport {
  display: flex;
  align-items: center;
  width: 65px;
  height: 22px;
  margin-left: 4px;
  border-radius: 11px;
  background-color: #251338;
  overflow: hidden;
}

.transport > button {
  flex: 1;
  display: flex;
  justify-content: center;
}

.mode {
  width: 23px;
  display: flex;
  flex-direction: column;
}

.mode button {
  height: 11px;
  padding-left: 2px;
  color: #7d6b8a;
  font-size: 6px;
  line-height: 9px;
}

.mode button.on {
  background-color: #dc9cf5;
  color: #2b1040;
}

.record {
  width: 19px;
  height: 21px;
  margin-left: 2px;
  display: flex;
  align-items: center;
  justify-content: center;
  border-radius: 10px;
  background-color: #311f40;
}

.tempo {
  width: 37px;
  height: 17px;
  margin: 0 6px 0 2px;
  padding: 0 2px;
  display: flex;
  justify-content: space-between;
  border-radius: 3px;
  background-color: #cfaef2;
  color: #3a2450;
  font-size: 13px;
  line-height: 17px;
}

.tempo small {
  font-size: 9px;
}

.buttons {
  display: flex;
  gap: 2px;
}

.tool {
  width: 20px;
  height: 22px;
  display: flex;
  align-items: center;
  justify-content: center;
  border: 1px solid #422d57;
  border-radius: 2px;
  background-color: #33204a;
}

.tool svg {
  width: 14px;
  height: 14px;
}

.tool.on {
  border-color: #e59cf8;
  background: radial-gradient(#f3b8fc, #d06bee);
  color: #571c74;
}

.tool.blue {
  border-color: #54457f;
  background-color: #46396f;
}

.clock {
  position: relative;
  width: 86px;
  height: 22px;
  margin-left: 3px;
  padding: 0 8px;
  text-align: right;
  background-color: #3d3263;
  font-size: 22px;
  line-height: 22px;
}

.clock small {
  font-size: 16px;
}

.clock sup {
  position: absolute;
  top: 0;
  right: 2px;
  font-size: 5px;
  font-weight: 600;
  line-height: 6px;
}

.scope {
  width: 112px;
  height: 22px;
  margin-left: 4px;
  display: flex;
  background-color: #35224a;
}

.scope span {
  width: 57px;
  margin-bottom: 10px;
  border-bottom: 1px solid #e4d9ec;
}

.scope i {
  width: 18px;
  height: 14px;
  margin-left: 2px;
  background: linear-gradient(#f4efe2 6px, #cfc8bd 6px, #cfc8bd 7px, #f4efe2 7px);
}

.scope svg {
  align-self: flex-end;
  margin: 0 3px 0 auto;
}

.cpu {
  width: 100px;
  height: 22px;
  margin: 0 3px;
  padding-right: 1px;
  display: flex;
  justify-content: flex-end;
  background-color: #160926;
  box-shadow: inset 0 0 0 1px #45325a;
  font-size: 9px;
  line-height: 11px;
}

.cpu i {
  width: 4px;
  height: 4px;
  margin: 11px 4px 0;
  background-color: #b9aac4;
}

.cpu div {
  width: 34px;
  display: flex;
  flex-direction: column;
  align-items: flex-end;
}

.cpu svg {
  display: inline-block;
}

.window-buttons {
  margin-left: auto;
  margin-right: 5px;
  display: flex;
  gap: 1px;
}

.window-buttons button {
  width: 12px;
  height: 12px;
  display: flex;
  align-items: center;
  justify-content: center;
  background-color: #35224a;
}

.window-buttons svg {
  width: 8px;
  height: 8px;
}

.window-buttons.plain {
  margin-right: 3px;
}

.window-buttons.plain button {
  background: none;
}

.position {
  width: 117px;
  height: 14px;
  margin: 0 9px;
  appearance: none;
}

.position::-webkit-slider-runnable-track {
  height: 3px;
  background-color: #796788;
}

.position::-webkit-slider-thumb {
  width: 10px;
  height: 12px;
  margin-top: -5px;
  appearance: none;
  border: 3px solid #24142f;
  border-radius: 5px;
  background-color: #57456a;
}

.magnet {
  margin: 0 2px 0 4px;
}

.snap {
  width: 42px;
  height: 15px;
  padding: 0 3px;
  display: flex;
  justify-content: space-between;
  background-color: #1d0e2e;
  font-size: 8px;
  line-height: 14px;
}

.pattern {
  display: flex;
  gap: 1px;
  height: 18px;
  margin: 0 4px 0 6px;
}

.pattern label {
  width: 63px;
  padding-right: 2px;
  display: flex;
  gap: 3px;
  background-color: #c9a3f0;
  color: #3a2450;
  font-size: 12px;
  line-height: 17px;
}

.pattern input {
  flex: 1;
  min-width: 0;
  text-align: right;
}

.pattern button {
  width: 11px;
  display: flex;
  align-items: center;
  justify-content: center;
  background-color: #2c1a3e;
  font-size: 10px;
}

.news {
  width: 111px;
  height: 22px;
  margin-left: 3px;
  padding: 0 2px;
  display: flex;
  align-items: center;
  justify-content: space-between;
  border: 1px solid #54457f;
  background-color: #43366b;
  font-size: 7px;
  line-height: 10px;
  white-space: nowrap;
}

.news em {
  color: #a698bd;
}

/* Browser */
.workspace {
  flex: 1;
  min-height: 0;
  display: flex;
}

.browser {
  width: 206px;
  display: flex;
  flex-direction: column;
  background-color: #170728;
}

.browser-title {
  height: 17px;
  padding-left: 6px;
  display: flex;
  align-items: center;
  gap: 4px;
  background-color: #37264a;
  color: #a896b5;
  font-size: 7px;
}

.tabs {
  height: 24px;
  padding: 2px 4px 2px 0;
  display: flex;
  background-color: #0d0420;
  color: #a79fae;
}

.tabs button {
  width: 34px;
  padding-bottom: 2px;
  display: flex;
  align-items: center;
  justify-content: center;
}

.tabs button.on {
  width: 31px;
  margin: 0 1px 2px 2px;
  padding: 0;
  border: 1px solid #a535bd;
  border-radius: 3px;
}

.tabs svg {
  width: 11px;
  height: 11px;
}

.tree {
  flex: 1;
  min-height: 0;
  margin-left: 8px;
  display: flex;
  flex-direction: column;
  justify-content: flex-end;
  overflow: hidden;
  background: linear-gradient(90deg, transparent 18px, #1f1238 18px, #1f1238 19px, transparent 19px) #0c031d;
  font-size: 11px;
  line-height: 14px;
  white-space: nowrap;
}

.tree svg {
  width: 9px;
  height: 9px;
}

.tree li,
.kit {
  display: flex;
  align-items: center;
  gap: 4px;
}

.folders {
  flex: none;
  display: grid;
  grid-auto-rows: 1fr;
  height: 92px;
  color: #ff2242;
}

.folders.top {
  height: 61px;
}

.folders li {
  padding-left: 42px;
}

.folders.top li {
  padding-left: 23px;
}

.folders .green {
  color: #bdf0cf;
}

.folders .open {
  background-color: #1a072f;
  color: #edfff8;
}

.folders .lit,
.kit {
  background-color: #1b0730;
}

.folders .sub {
  padding-left: 51px;
}

.folders svg {
  opacity: 0.75;
}

.kit {
  flex: none;
  height: 21px;
  padding: 1px 0 0 33px;
  color: #e5193a;
  font-family: "Open Sans", sans-serif;
  font-size: 10px;
  font-weight: 700;
}

.samples {
  flex: none;
  background-color: #2a1428;
  color: #ecd8df;
}

.samples li {
  height: 14px;
  padding-left: 61px;
}

.samples .selected {
  position: relative;
  padding-left: 67px;
  background-color: #4a3343;
  color: #fff;
}

.samples .selected::before {
  content: "›";
  position: absolute;
  left: 1px;
  top: 0;
  width: 6px;
  background-color: #75606c;
  color: #2a1428;
  line-height: 14px;
  text-align: center;
}

.preview {
  position: relative;
  height: 72px;
  margin: 2px 0 0 8px;
  background-color: #020006;
}

.wave {
  width: 100%;
  height: 70px;
}

.play {
  position: absolute;
  left: 4px;
  bottom: 6px;
  width: 14px;
  height: 8px;
  display: flex;
  align-items: center;
  justify-content: center;
  border-radius: 2px;
  background-color: #c05fec;
}

.rate {
  position: absolute;
  right: 3px;
  bottom: 4px;
  color: #a598ad;
  font-size: 7px;
}

.rate b {
  color: #fff;
  font-weight: 600;
}

.rate svg {
  display: inline-block;
  vertical-align: -2px;
}

.tags {
  height: 17px;
  margin-left: 8px;
  padding: 0 3px 3px 5px;
  display: flex;
  align-items: center;
  gap: 6px;
  font-size: 8px;
}

.tags input {
  flex: 1;
  min-width: 0;
  height: 14px;
  background-color: #080112;
}

/* Piano roll */
.piano-roll {
  flex: 1;
  min-width: 0;
  display: flex;
  flex-direction: column;
  border-left: 6px solid #35234a;
  background-color: #33214a;
}

.roll-title {
  height: 17px;
  display: flex;
  align-items: center;
  gap: 3px;
}

.roll-title h1 {
  margin: 0;
  font-size: 9px;
  font-weight: 600;
}

.speaker {
  margin-left: 4px;
}

.roll-head {
  height: 27px;
  display: flex;
}

.corner {
  width: 47px;
  height: 27px;
}

.head-bars {
  flex: 1;
  display: flex;
  flex-direction: column;
}

.overview {
  height: 14px;
  display: flex;
  align-items: center;
  padding: 0 2px;
  background-color: #24133a;
  color: #5c4670;
}

.overview .last {
  margin-left: auto;
}

.overview-range {
  width: 385px;
  height: 12px;
  margin-left: 9px;
  display: flex;
  align-items: center;
  border: 1px solid #68477f;
  background: linear-gradient(90deg, transparent 44px, #c35fe8 44px, #c35fe8 45px, #3a1b57 45px) #351449;
}

.ruler {
  position: relative;
  flex: 1;
  display: grid;
  grid-template-columns: 320px 320px 320px 1fr;
  overflow: hidden;
  background-color: #12021f;
  color: #8a7899;
  font-size: 7px;
  line-height: 13px;
}

.ruler span {
  padding-left: 1px;
}

.marker {
  position: absolute;
  left: 112px;
  top: 1px;
}

.head-scroll,
.scroll {
  width: 13px;
  display: flex;
  flex-direction: column;
  background-color: #271737;
}

.head-scroll button,
.scroll button {
  height: 13px;
  background-color: #4b385c;
  color: #21102e;
  font-size: 8px;
  line-height: 13px;
}

.roll-body {
  flex: 1;
  min-height: 0;
  display: flex;
  overflow: hidden;
}

.keys {
  width: 48px;
  padding-top: 5px;
  overflow: hidden;
  border-right: 1px solid #10051c;
  background-color: #d9dfe2;
}

.key {
  position: relative;
  height: 18px;
  padding-right: 1px;
  background: linear-gradient(90deg, #c3cacc, #e2e7ea);
  color: #5d646c;
  font-family: Roboto, sans-serif;
  font-size: 9px;
  line-height: 20px;
  text-align: right;
}

.key.tall {
  height: 24px;
  line-height: 26px;
}

.key.top {
  box-shadow: inset 0 1px #b9bfc3;
}

.key.root {
  background: linear-gradient(90deg, #a9adaf, #bfc3c5);
}

.key.pressed {
  background: linear-gradient(90deg, #c98d49, #e0a765);
  color: #6b4318;
}

.key.sharp::before {
  content: "";
  position: absolute;
  top: -6px;
  left: 0;
  z-index: 1;
  width: 30px;
  height: 12px;
  background: linear-gradient(90deg, #2c3233, #414747);
}

.grid {
  position: relative;
  flex: 1;
  overflow: hidden;
  background-color: #2c004e;
  background-image:
    repeating-linear-gradient(90deg, rgba(15, 0, 30, 0.3) 0, rgba(15, 0, 30, 0.3) 1px, transparent 1px, transparent 320px),
    repeating-linear-gradient(90deg, rgba(15, 0, 30, 0.1) 0, rgba(15, 0, 30, 0.1) 1px, transparent 1px, transparent 80px),
    repeating-linear-gradient(#2c004e 0, #2c004e 12px, #260047 12px, #260047 24px, #2c004e 24px, #2c004e 36px, #260047 36px, #260047 48px, #2c004e 48px, #2c004e 60px, #260047 60px, #260047 72px, #2c004e 72px, #2c004e 96px, #260047 96px, #260047 108px, #2c004e 108px, #2c004e 120px, #260047 120px, #260047 132px, #2c004e 132px, #2c004e 144px);
  background-position: 0 0, 0 0, 0 47px;
}

.canvas {
  width: 100%;
  height: 100%;
}

/* sits over the notes and the velocity stems */
.playhead {
  position: absolute;
  top: 0;
  bottom: 0;
  left: 110px;
  width: 8px;
  border-right: 1px solid #c25cf0;
  background: linear-gradient(90deg, transparent, #7a08b8);
}

.scroll span {
  flex: 1;
}

.splitter {
  height: 7px;
  border-top: 1px solid #160622;
  border-bottom: 1px solid #160622;
}

.control {
  height: 119px;
  display: flex;
}

.control-name {
  width: 48px;
  padding: 0 2px 0 8px;
  align-self: flex-start;
  display: flex;
  justify-content: space-between;
  font-size: 9px;
  line-height: 14px;
}

.velocity {
  position: relative;
  flex: 1;
  overflow: hidden;
  background-color: #2c004e;
}

.velocity span {
  position: absolute;
  left: 5px;
  top: 0;
  color: #45205f;
  font-size: 9px;
  line-height: 14px;
}

/* Taskbar */
.taskbar {
  height: 20px;
  display: flex;
  background-color: #1b1b1c;
}

.apps {
  width: 370px;
  display: flex;
}

.apps button {
  flex: 1;
  display: flex;
  align-items: center;
  justify-content: center;
  border-bottom: 1px solid transparent;
}

.apps .active {
  background-color: #48484a;
  border-color: #c9c9c9;
}

.apps .running {
  border-color: #c9c9c9;
}

.taskbar svg {
  width: 11px;
  height: 11px;
}

.app span {
  width: 11px;
  height: 11px;
  border: 1px solid #8e62c4;
  background-color: #1c0f36;
  color: #b48cf0;
  font-size: 6px;
  font-weight: 600;
  line-height: 9px;
}

.ps span {
  border-color: #04233b;
  background-color: #04233b;
  color: #43a7ee;
}

.pr span {
  border-color: #8f4ab4;
  background-color: #260b36;
}

.tray {
  margin-left: auto;
  padding-right: 16px;
  display: flex;
  align-items: center;
  gap: 5px;
  font-size: 8px;
}

.tray .note {
  margin-left: 6px;
}
```
